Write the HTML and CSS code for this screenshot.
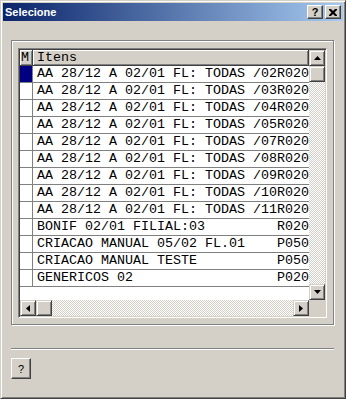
FILE: index.html
```html
<!DOCTYPE html>
<html lang="pt">
<head>
    <meta charset="UTF-8">
    <link rel="stylesheet" href="styles.css">
    <title>Selecione</title>
</head>
<body>
    <div class="janela">
        <div class="titulo">
            <span class="tituloTexto">Selecione</span>
            <div class="botoesTitulo">
                <div class="btnTitulo ajuda">?</div>
                <div class="btnTitulo">
                    <svg width="8" height="7" viewBox="0 0 8 7"><path d="M0 0h2l2 2 2-2h2v1l-2.5 2.5L8 6v1H6L4 5 2 7H0V6l2.5-2.5L0 1z" fill="#000"/></svg>
                </div>
            </div>
        </div>
        <div class="cliente">
            <div class="grupo">
                <div class="grade">
                    <div class="gradeTopo">
                        <div class="dados">
                            <div class="linha cabecalho">
                                <div class="cel marca">M</div>
                                <div class="cel item">Itens</div>
                            </div>
                            <div class="linha"><div class="cel marca sel"></div><div class="cel item">AA 28/12 A 02/01 FL: TODAS /02R020</div></div>
                            <div class="linha"><div class="cel marca"></div><div class="cel item">AA 28/12 A 02/01 FL: TODAS /03R020</div></div>
                            <div class="linha"><div class="cel marca"></div><div class="cel item">AA 28/12 A 02/01 FL: TODAS /04R020</div></div>
                            <div class="linha"><div class="cel marca"></div><div class="cel item">AA 28/12 A 02/01 FL: TODAS /05R020</div></div>
                            <div class="linha"><div class="cel marca"></div><div class="cel item">AA 28/12 A 02/01 FL: TODAS /07R020</div></div>
                            <div class="linha"><div class="cel marca"></div><div class="cel item">AA 28/12 A 02/01 FL: TODAS /08R020</div></div>
                            <div class="linha"><div class="cel marca"></div><div class="cel item">AA 28/12 A 02/01 FL: TODAS /09R020</div></div>
                            <div class="linha"><div class="cel marca"></div><div class="cel item">AA 28/12 A 02/01 FL: TODAS /10R020</div></div>
                            <div class="linha"><div class="cel marca"></div><div class="cel item">AA 28/12 A 02/01 FL: TODAS /11R020</div></div>
                            <div class="linha"><div class="cel marca"></div><div class="cel item">BONIF 02/01 FILIAL:03         R020</div></div>
                            <div class="linha"><div class="cel marca"></div><div class="cel item">CRIACAO MANUAL 05/02 FL.01    P050</div></div>
                            <div class="linha"><div class="cel marca"></div><div class="cel item">CRIACAO MANUAL TESTE          P050</div></div>
                            <div class="linha"><div class="cel marca"></div><div class="cel item">GENERICOS 02                  P020</div></div>
                        </div>
                        <!-- barra vertical -->
                        <div class="rolagemV">
                            <div class="btnRol">
                                <svg width="7" height="4" viewBox="0 0 7 4"><path d="M3.5 0L7 4H0z" fill="#000"/></svg>
                            </div>
                            <div class="btnRol"></div>
                            <div class="trilho"></div>
                            <div class="btnRol">
                                <svg width="7" height="4" viewBox="0 0 7 4"><path d="M0 0h7L3.5 4z" fill="#000"/></svg>
                            </div>
                        </div>
                    </div>
                    <!-- barra horizontal -->
                    <div class="gradeBase">
                        <div class="rolagemH">
                            <div class="btnRol">
                                <svg width="4" height="7" viewBox="0 0 4 7"><path d="M4 0v7L0 3.5z" fill="#000"/></svg>
                            </div>
                            <div class="btnRol"></div>
                            <div class="trilho"></div>
                            <div class="btnRol">
                                <svg width="4" height="7" viewBox="0 0 4 7"><path d="M0 0l4 3.5L0 7z" fill="#000"/></svg>
                            </div>
                        </div>
                        <div class="canto"></div>
                    </div>
                </div>
            </div>
            <div class="separador"></div>
            <button class="btnAjuda">?</button>
        </div>
    </div>
</body>
</html>
```

FILE: styles.css
```css
body {
    margin: 0;
    padding: 0;
    font-family: 'Liberation Sans', Arial, sans-serif;
}

.janela {
    width: 346px;
    height: 399px;
    box-sizing: border-box;
    padding: 2px;
    background: #d4d0c8;
    border: 1px solid;
    border-color: #d4d0c8 #404040 #404040 #d4d0c8;
    box-shadow: inset 1px 1px #fff, inset -1px -1px #808080;
    display: flex;
    flex-direction: column;
}

.titulo {
    height: 18px;
    display: flex;
    align-items: center;
    justify-content: space-between;
    background: linear-gradient(to right, #0a246a, #a6caf0);
}

.tituloTexto {
    color: #fff;
    font-weight: bold;
    font-size: 11px;
    padding-left: 2px;
}

.botoesTitulo {
    display: flex;
    gap: 2px;
    margin-right: 2px;
}

.btnTitulo {
    width: 16px;
    height: 14px;
    box-sizing: border-box;
    background: #d4d0c8;
    border: 1px solid;
    border-color: #fff #404040 #404040 #fff;
    box-shadow: inset -1px -1px #808080;
    display: flex;
    align-items: center;
    justify-content: center;
}

.btnTitulo.ajuda {
    font-weight: bold;
    font-size: 11px;
    line-height: 12px;
    color: #000;
}

.cliente {
    flex: 1;
    padding: 19px 8px 0 8px;
}

.grupo {
    width: 323px;
    box-sizing: border-box;
    padding: 7px 6px 6px 6px;
    border: 1px solid #808080;
    box-shadow: inset 1px 1px #fff, 1px 1px #fff;
}

.grade {
    width: 309px;
    height: 270px;
    box-sizing: border-box;
    border: 1px solid;
    border-color: #808080 #fff #fff #808080;
    box-shadow: inset 1px 1px #404040, inset -1px -1px #d4d0c8;
    padding: 1px;
    background: #fff;
    display: flex;
    flex-direction: column;
}

.gradeTopo {
    display: flex;
    height: 250px;
}

.dados {
    flex: 1;
    overflow: hidden;
    background: #fff;
}

.linha {
    display: grid;
    grid-template-columns: 13px 1fr;
    height: 17px;
}

.cel {
    box-sizing: border-box;
    border-bottom: 1px solid #808080;
    font-family: 'Liberation Mono', 'Courier New', monospace;
    font-size: 13.33px;
    line-height: 16px;
    color: #000;
    white-space: pre;
    overflow: hidden;
}

.marca {
    border-right: 1px solid #808080;
}

.marca.sel {
    background: #000080;
}

.item {
    padding-left: 4px;
}

.cabecalho {
    height: 16px;
}

.cabecalho .cel {
    background: #d4d0c8;
    line-height: 15px;
    border-bottom: 1px solid #404040;
    border-right: 1px solid #404040;
    box-shadow: inset 1px 1px #fff, inset -1px -1px #808080;
}

.cabecalho .marca {
    padding-left: 1px;
}

.rolagemV {
    width: 16px;
    display: flex;
    flex-direction: column;
}

.btnRol {
    width: 16px;
    height: 16px;
    flex: none;
    box-sizing: border-box;
    background: #d4d0c8;
    border: 1px solid;
    border-color: #d4d0c8 #404040 #404040 #d4d0c8;
    box-shadow: inset 1px 1px #fff, inset -1px -1px #808080;
    display: flex;
    align-items: center;
    justify-content: center;
}

.trilho {
    flex: 1;
    background-image: conic-gradient(#fff 0 25%, #d4d0c8 0 50%, #fff 0 75%, #d4d0c8 0);
    background-size: 2px 2px;
}

.gradeBase {
    display: flex;
    height: 16px;
}

.rolagemH {
    flex: 1;
    display: flex;
}

.canto {
    width: 16px;
    background: #d4d0c8;
}

.separador {
    width: 323px;
    height: 2px;
    box-sizing: border-box;
    margin-top: 23px;
    border-top: 1px solid #808080;
    border-bottom: 1px solid #fff;
}

.btnAjuda {
    display: block;
    margin-top: 8px;
    width: 20px;
    height: 21px;
    padding: 0;
    box-sizing: border-box;
    background: #d4d0c8;
    border: 1px solid;
    border-color: #fff #404040 #404040 #fff;
    box-shadow: inset -1px -1px #808080;
    font-family: 'Liberation Sans', Arial, sans-serif;
    font-size: 11px;
    color: #000;
}
```
